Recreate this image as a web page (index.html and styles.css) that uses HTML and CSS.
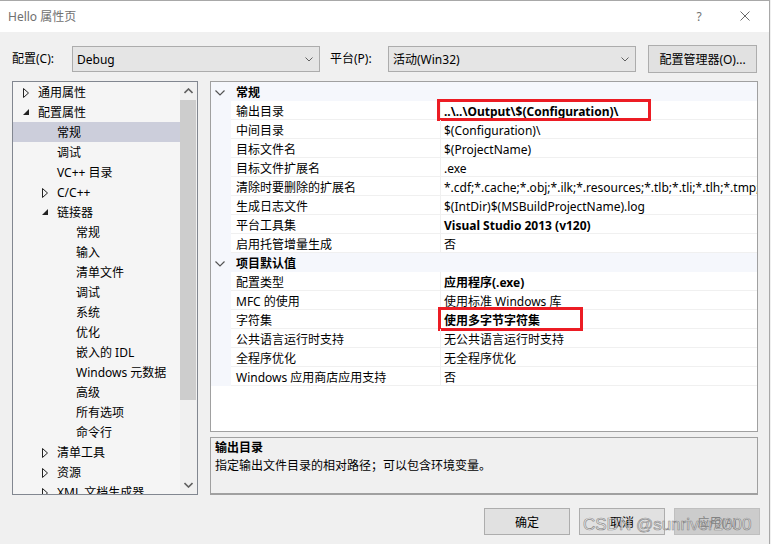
FILE: index.html
```html
<!DOCTYPE html>
<html lang="zh-CN">
<head>
    <meta charset="UTF-8">
    <meta name="viewport" content="width=device-width, initial-scale=1.0">
    <title>Hello 属性页</title>
    <link rel="stylesheet" href="styles.css">
</head>
<body>
<div class="window">

    <div class="titlebar">
        <span class="title">Hello 属性页</span>
        <span class="help">?</span>
        <svg class="close" width="10" height="10" viewBox="0 0 10 10">
            <path d="M0.5 0.5 L9.5 9.5 M9.5 0.5 L0.5 9.5" stroke="#6a6a6a" stroke-width="1" fill="none"/>
        </svg>
    </div>

    <div class="toolbar">
        <span class="lbl lbl-config">配置(C):</span>
        <div class="combo">
            <span>Debug</span>
            <svg width="8" height="5" viewBox="0 0 8 5"><path d="M0.5 0.5 L4 4 L7.5 0.5" stroke="#606060" fill="none"/></svg>
        </div>
        <span class="lbl lbl-platform">平台(P):</span>
        <div class="combo">
            <span>活动(Win32)</span>
            <svg width="8" height="5" viewBox="0 0 8 5"><path d="M0.5 0.5 L4 4 L7.5 0.5" stroke="#606060" fill="none"/></svg>
        </div>
        <button class="btn btn-manager">配置管理器(O)...</button>
    </div>

    <div class="main">
        <div class="tree">
            <div class="tree-list">
                <div class="node lv1"><span class="arr"><svg width="7" height="10" viewBox="0 0 7 10"><path d="M0.5 0.5 L5.5 5 L0.5 9.5 Z" stroke="#222" fill="none"/></svg></span>通用属性</div>
                <div class="node lv1"><span class="arr"><svg width="7" height="7" viewBox="0 0 7 7"><path d="M6 0 L6 6 L0 6 Z" fill="#222"/></svg></span>配置属性</div>
                <div class="node lv2 selected"><span class="arr"></span>常规</div>
                <div class="node lv2"><span class="arr"></span>调试</div>
                <div class="node lv2"><span class="arr"></span>VC++ 目录</div>
                <div class="node lv2"><span class="arr"><svg width="7" height="10" viewBox="0 0 7 10"><path d="M0.5 0.5 L5.5 5 L0.5 9.5 Z" stroke="#222" fill="none"/></svg></span>C/C++</div>
                <div class="node lv2"><span class="arr"><svg width="7" height="7" viewBox="0 0 7 7"><path d="M6 0 L6 6 L0 6 Z" fill="#222"/></svg></span>链接器</div>
                <div class="node lv3"><span class="arr"></span>常规</div>
                <div class="node lv3"><span class="arr"></span>输入</div>
                <div class="node lv3"><span class="arr"></span>清单文件</div>
                <div class="node lv3"><span class="arr"></span>调试</div>
                <div class="node lv3"><span class="arr"></span>系统</div>
                <div class="node lv3"><span class="arr"></span>优化</div>
                <div class="node lv3"><span class="arr"></span>嵌入的 IDL</div>
                <div class="node lv3"><span class="arr"></span>Windows 元数据</div>
                <div class="node lv3"><span class="arr"></span>高级</div>
                <div class="node lv3"><span class="arr"></span>所有选项</div>
                <div class="node lv3"><span class="arr"></span>命令行</div>
                <div class="node lv2"><span class="arr"><svg width="7" height="10" viewBox="0 0 7 10"><path d="M0.5 0.5 L5.5 5 L0.5 9.5 Z" stroke="#222" fill="none"/></svg></span>清单工具</div>
                <div class="node lv2"><span class="arr"><svg width="7" height="10" viewBox="0 0 7 10"><path d="M0.5 0.5 L5.5 5 L0.5 9.5 Z" stroke="#222" fill="none"/></svg></span>资源</div>
                <div class="node lv2"><span class="arr"><svg width="7" height="10" viewBox="0 0 7 10"><path d="M0.5 0.5 L5.5 5 L0.5 9.5 Z" stroke="#222" fill="none"/></svg></span>XML 文档生成器</div>
            </div>
            <div class="scrollbar">
                <div class="sb-btn"><svg width="9" height="6" viewBox="0 0 9 6"><path d="M0.5 5 L4.5 1 L8.5 5" stroke="#606060" stroke-width="1.6" fill="none"/></svg></div>
                <div class="sb-track"><div class="sb-thumb"></div></div>
                <div class="sb-btn"><svg width="9" height="6" viewBox="0 0 9 6"><path d="M0.5 1 L4.5 5 L8.5 1" stroke="#606060" stroke-width="1.6" fill="none"/></svg></div>
            </div>
        </div>

        <div class="right">
            <div class="grid">
                <div class="cat"><span class="gut"><svg width="10" height="6" viewBox="0 0 10 6"><path d="M0.5 0.5 L5 5 L9.5 0.5" stroke="#555" stroke-width="1.2" fill="none"/></svg></span><b>常规</b></div>
                <div class="prop"><span class="gut"></span><span class="name">输出目录</span><span class="val bold">..\..\Output\$(Configuration)\</span><span class="mark mark-out"></span></div>
                <div class="prop"><span class="gut"></span><span class="name">中间目录</span><span class="val">$(Configuration)\</span></div>
                <div class="prop"><span class="gut"></span><span class="name">目标文件名</span><span class="val">$(ProjectName)</span></div>
                <div class="prop"><span class="gut"></span><span class="name">目标文件扩展名</span><span class="val">.exe</span></div>
                <div class="prop"><span class="gut"></span><span class="name">清除时要删除的扩展名</span><span class="val">*.cdf;*.cache;*.obj;*.ilk;*.resources;*.tlb;*.tli;*.tlh;*.tmp;*.rsp;*.pgc;*.pgd;*.meta</span></div>
                <div class="prop"><span class="gut"></span><span class="name">生成日志文件</span><span class="val">$(IntDir)$(MSBuildProjectName).log</span></div>
                <div class="prop"><span class="gut"></span><span class="name">平台工具集</span><span class="val bold">Visual Studio 2013 (v120)</span></div>
                <div class="prop"><span class="gut"></span><span class="name">启用托管增量生成</span><span class="val">否</span></div>
                <div class="cat"><span class="gut"><svg width="10" height="6" viewBox="0 0 10 6"><path d="M0.5 0.5 L5 5 L9.5 0.5" stroke="#555" stroke-width="1.2" fill="none"/></svg></span><b>项目默认值</b></div>
                <div class="prop"><span class="gut"></span><span class="name">配置类型</span><span class="val bold">应用程序(.exe)</span></div>
                <div class="prop"><span class="gut"></span><span class="name">MFC 的使用</span><span class="val">使用标准 Windows 库</span></div>
                <div class="prop"><span class="gut"></span><span class="name">字符集</span><span class="val bold">使用多字节字符集</span><span class="mark mark-charset"></span></div>
                <div class="prop"><span class="gut"></span><span class="name">公共语言运行时支持</span><span class="val">无公共语言运行时支持</span></div>
                <div class="prop"><span class="gut"></span><span class="name">全程序优化</span><span class="val">无全程序优化</span></div>
                <div class="prop"><span class="gut"></span><span class="name">Windows 应用商店应用支持</span><span class="val">否</span></div>
            </div>
            <div class="desc">
                <div class="desc-title">输出目录</div>
                <div>指定输出文件目录的相对路径；可以包含环境变量。</div>
            </div>
        </div>
    </div>

    <div class="footer">
        <button class="btn">确定</button>
        <button class="btn">取消</button>
        <button class="btn btn-disabled">应用(A)</button>
    </div>

    <div class="watermark">CSDN @sunriver2000</div>
</div>
</body>
</html>
```

FILE: styles.css
```css
html,body{
    margin: 0;
    padding: 0;
}
body{
    width: 771px;
    height: 544px;
    overflow: hidden;
    background-color: #f0f0f0;
    font-family: "Noto Sans", "Noto Sans CJK SC", sans-serif;
    font-size: 12px;
    color: #000;
}
.window{
    position: relative;
    width: 769px;
    height: 543px;
    border-top: 1px solid #a8a8a8;
    border-right: 1px solid #a8a8a8;
}

/* title bar */
.titlebar{
    display: flex;
    align-items: center;
    height: 30px;
    padding-left: 8px;
    padding-right: 19px;
    padding-bottom: 1px;
    background-color: #fff;
}
.title{
    flex: 1;
    color: #707070;
}
.help{
    width: 20px;
    text-align: center;
    color: #707070;
    margin-right: 31px;
}

/* toolbar */
.toolbar{
    display: flex;
    align-items: center;
    box-sizing: border-box;
    height: 49px;
    padding-top: 5px;
    padding-left: 12px;
}
.lbl{
    line-height: 18px;
}
.lbl-config{
    width: 60px;
}
.lbl-platform{
    width: 58px;
    margin-left: 10px;
}
.combo{
    display: flex;
    align-items: center;
    justify-content: space-between;
    box-sizing: border-box;
    width: 248px;
    height: 26px;
    padding: 0 6px 0 4px;
    background-color: #e5e5e5;
    border: 1px solid #acacac;
}
.btn{
    box-sizing: border-box;
    height: 27px;
    width: 86px;
    padding: 0;
    background-color: #e1e1e1;
    border: 1px solid #adadad;
    font-family: inherit;
    font-size: 12px;
    color: #000;
}
.btn-manager{
    width: 109px;
    height: 28px;
    margin-left: 12px;
}
.btn-disabled{
    background-color: #cccccc;
    border-color: #bfbfbf;
    color: #838383;
}

/* main area */
.main{
    display: flex;
    gap: 12px;
    height: 414px;
    padding-left: 12px;
}
.tree{
    display: flex;
    box-sizing: border-box;
    width: 186px;
    height: 414px;
    border: 1px solid #828790;
    background-color: #f5f5f5;
}
.tree-list{
    flex: 1;
    overflow: hidden;
}
.node{
    display: flex;
    align-items: center;
    box-sizing: border-box;
    height: 20px;
    padding-top: 1px;
    line-height: 19px;
    white-space: nowrap;
}
.node .arr{
    display: flex;
    align-items: center;
    width: 17px;
    height: 19px;
    padding-left: 2px;
    box-sizing: border-box;
}
.lv1{ padding-left: 8px; }
.lv2{ padding-left: 27px; }
.lv3{ padding-left: 46px; }
.selected{
    background-color: #cccedb;
}
.scrollbar{
    display: flex;
    flex-direction: column;
    width: 17px;
    background-color: #f0f0f0;
}
.sb-btn{
    display: flex;
    align-items: center;
    justify-content: center;
    height: 18px;
}
.sb-track{
    flex: 1;
}
.sb-thumb{
    height: 300px;
    margin-right: 1px;
    background-color: #cdcdcd;
}

/* property grid */
.right{
    display: flex;
    flex-direction: column;
    gap: 5px;
    width: 548px;
}
.grid{
    position: relative;
    box-sizing: border-box;
    height: 351px;
    border: 1px solid #a0a0a0;
    background-color: #fff;
    overflow: hidden;
}
.cat{
    display: flex;
    height: 19px;
    background-color: #f5f7fc;
}
.gut{
    display: flex;
    align-items: center;
    justify-content: center;
    width: 20px;
    height: 19px;
    padding-right: 3px;
    padding-top: 2px;
    box-sizing: border-box;
    background-color: #f5f7fc;
}
.prop .gut{
    padding-top: 0;
}
.cat b{
    padding-left: 5px;
    padding-top: 2px;
    line-height: 18px;
}
.prop{
    position: relative;
    display: grid;
    grid-template-columns: 20px 209px 1fr;
    height: 19px;
}
.name, .val{
    box-sizing: border-box;
    height: 19px;
    padding-top: 2px;
    line-height: 17px;
    border-bottom: 1px solid #f0f0f0;
    white-space: nowrap;
    overflow: hidden;
}
.name{
    padding-left: 5px;
}
.val{
    padding-left: 3px;
    border-left: 1px solid #f0f0f0;
}
.bold{
    font-weight: bold;
}
.mark{
    position: absolute;
    box-sizing: border-box;
    border: 3px solid #ec1c24;
}
.mark-out{
    left: 226px;
    top: -2px;
    width: 214px;
    height: 22px;
}
.mark-charset{
    left: 227px;
    top: -3px;
    width: 145px;
    height: 24px;
}

/* description */
.desc{
    box-sizing: border-box;
    height: 58px;
    padding: 1px 4px;
    border: 1px solid #a0a0a0;
    border-bottom-width: 2px;
    line-height: 18px;
}
.desc-title{
    font-weight: bold;
}

/* footer */
.footer{
    display: flex;
    justify-content: flex-end;
    gap: 9px;
    padding-top: 13px;
    padding-right: 9px;
}

.watermark{
    position: absolute;
    left: 583px;
    top: 514px;
    font-family: "Liberation Sans", sans-serif;
    font-size: 17px;
    color: rgba(255, 255, 255, 0.55);
    -webkit-text-stroke: 0.7px rgba(110, 110, 110, 0.75);
    white-space: nowrap;
}
```
